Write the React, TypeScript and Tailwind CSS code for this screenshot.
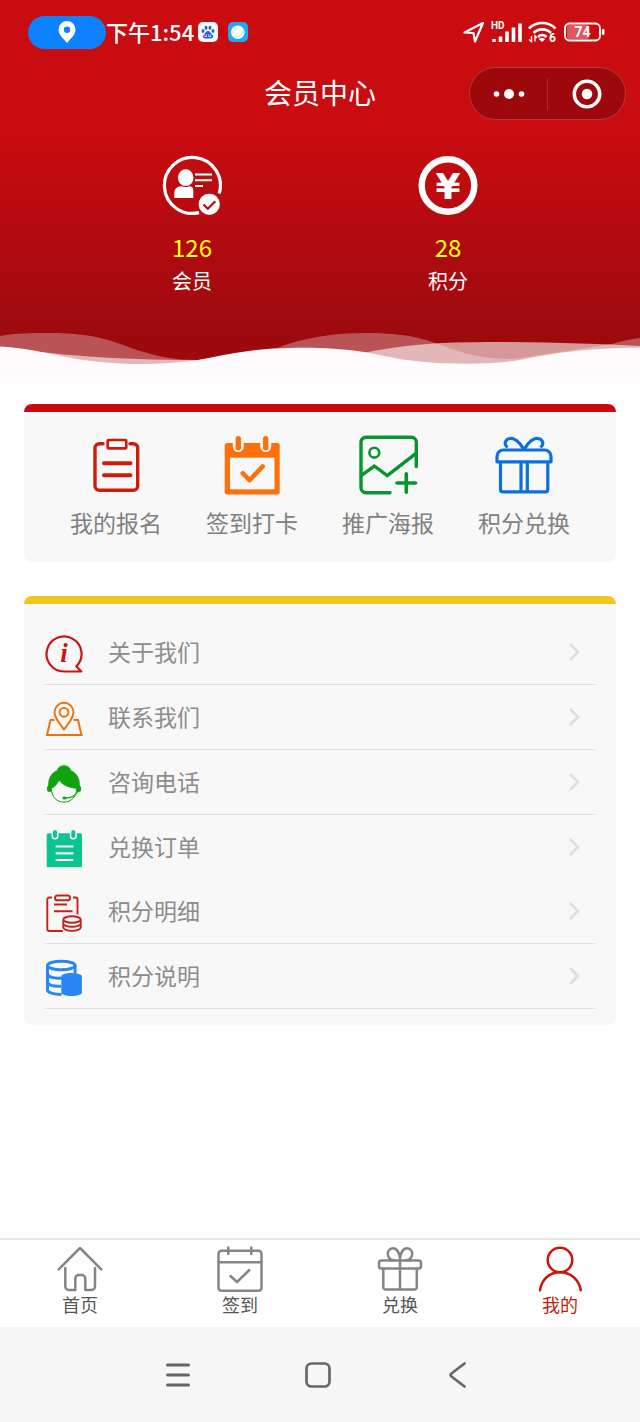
import type { ReactNode } from 'react';

const stats = [
  { name: '会员', value: 126, icon: <MemberIcon /> },
  { name: '积分', value: 28, icon: <PointsIcon /> },
];

const shortcuts = [
  { name: '我的报名', icon: <ClipboardIcon /> },
  { name: '签到打卡', icon: <CheckInIcon /> },
  { name: '推广海报', icon: <PosterIcon /> },
  { name: '积分兑换', icon: <GiftIcon /> },
];

const menu = [
  { name: '关于我们', icon: <AboutIcon />, divider: true },
  { name: '联系我们', icon: <ContactIcon />, divider: true },
  { name: '咨询电话', icon: <ServiceIcon />, divider: true },
  { name: '兑换订单', icon: <OrderIcon />, divider: false },
  { name: '积分明细', icon: <DetailIcon />, divider: true },
  { name: '积分说明', icon: <RulesIcon />, divider: true },
];

const tabs = [
  { name: '首页', icon: <HomeTabIcon />, active: false },
  { name: '签到', icon: <CalendarTabIcon />, active: false },
  { name: '兑换', icon: <GiftTabIcon />, active: false },
  { name: '我的', icon: <UserTabIcon />, active: true },
];

/* ---------- header icons ---------- */

function MemberIcon() {
  return (
    <svg className="size-[60px]" viewBox="0 0 60 60" fill="none" stroke="#fff">
      <path d="M57.2 38.5A28 28 0 1 0 37 57.6" strokeWidth="3.2" />
      <ellipse cx="23.7" cy="22.7" rx="7.8" ry="8.4" fill="#fff" stroke="none" />
      <path d="M12.3 43V38.5c0-4.5 2.5-7 7-7.200l4.400 1 4.400-1c2 .2 3.200 1.600 3.200 4.200V43z" fill="#fff" stroke="none" />
      <path d="M33 19.5h17M33 25.3h17M33 31h8" strokeWidth="2" />
      <circle cx="47.3" cy="49.3" r="10.6" fill="#fff" stroke="none" />
      <path d="M41.5 49.5l4.3 4.2 7.5-7.4" stroke="#b50c10" strokeWidth="2.2" />
    </svg>
  );
}

function PointsIcon() {
  return (
    <svg className="size-[60px]" viewBox="0 0 60 60">
      <circle cx="30" cy="30.5" r="26.3" fill="none" stroke="#fff" strokeWidth="6.4" />
      <text x="30" y="44" textAnchor="middle" fontSize="36" fontWeight="700" fill="#fff" fontFamily="DejaVu Sans, sans-serif">
        ¥
      </text>
    </svg>
  );
}

/* ---------- shortcut icons ---------- */

function ClipboardIcon() {
  return (
    <svg className="size-[60px]" viewBox="0 0 60 60" fill="none" stroke="#cf1a0c" strokeWidth="3.4" strokeLinecap="round">
      <path d="M17 8.7h-3.5a4.5 4.5 0 0 0-4.5 4.5v37.6a4.5 4.5 0 0 0 4.5 4.5h33.7a4.5 4.5 0 0 0 4.5-4.5V13.2a4.5 4.5 0 0 0-4.5-4.5H44" />
      <rect x="21.7" y="5" width="18.6" height="8.4" rx="1" strokeWidth="2.6" />
      <path d="M18 28.3h26.5M18 40.3h26.5" strokeWidth="4" />
    </svg>
  );
}

function CheckInIcon() {
  return (
    <svg className="size-[60px]" viewBox="0 0 60 60" fill="none" strokeLinecap="round" strokeLinejoin="round">
      <rect x="2.7" y="8" width="55" height="51.5" rx="2.5" fill="#ff6f0a" />
      <rect x="8" y="22.7" width="44.5" height="31.6" fill="#f8f8f8" />
      <path d="M16.3 4v7.5M43.7 4v7.5" stroke="#f8f8f8" strokeWidth="11" />
      <path d="M16.3 3.7v9M43.7 3.7v9" stroke="#ff6f0a" strokeWidth="5.4" />
      <path d="M20.7 38.3l6.9 6.9 13-13.7" stroke="#ff6f0a" strokeWidth="4.6" />
    </svg>
  );
}

function PosterIcon() {
  return (
    <svg className="size-[60px]" viewBox="0 0 60 60" fill="none" stroke="#08942e" strokeWidth="3.4" strokeLinecap="round">
      <path d="M32 57.7H8a5 5 0 0 1-5-5V7.3a5 5 0 0 1 5-5h45.3a5 5 0 0 1 5 5V31.5" />
      <circle cx="16.3" cy="17.7" r="4.9" strokeWidth="2.6" />
      <path d="M3.5 40.3L16.3 31l13 9.5L58 18.3" />
      <path d="M48.3 38.7v18.6M39 48h18.6" strokeWidth="3.6" />
    </svg>
  );
}

function GiftIcon() {
  return (
    <svg className="size-[60px]" viewBox="0 0 60 60" fill="none" stroke="#0b6fdc" strokeWidth="3.2" strokeLinejoin="round">
      <path d="M3 26.8V21.5a6.5 6.5 0 0 1 6.500-6.500h41a6.500 6.500 0 0 1 6.500 6.500v5.300z" />
      <path d="M6.500 28v26.500a2.300 2.300 0 0 0 2.300 2.300h42.700a2.300 2.300 0 0 0 2.300-2.300V28M27 28v28M33.300 28v28" />
      <path d="M29.500 14C26 7 20.500 3 16 3.500c-5 .6-6.500 6-2.500 9M30.500 14C34 7 39.500 3 44 3.500c5 .6 6.500 6 2.500 9" />
    </svg>
  );
}

/* ---------- menu icons ---------- */

function AboutIcon() {
  return (
    <svg className="size-[38px]" viewBox="0 0 38 38">
      <path d="M31.4 31.4A17.5 17.5 0 1 0 19 36.5h17.3z" fill="none" stroke="#cb1410" strokeWidth="2.2" strokeLinejoin="round" />
      <text x="19" y="27" textAnchor="middle" fontSize="27" fontWeight="700" fontStyle="italic" fill="#cb1410" fontFamily="Liberation Serif, serif">
        i
      </text>
    </svg>
  );
}

function ContactIcon() {
  return (
    <svg className="size-[38px]" viewBox="0 0 38 38" fill="none" stroke="#f0720f" strokeWidth="2">
      <path d="M19 29.5C15 24 9.500 18.500 9.500 12.300a9.500 9.500 0 0 1 19 0C28.500 18.500 23 24 19 29.500z" />
      <circle cx="19" cy="12.3" r="4.4" />
      <path d="M9.5 20H5.5L2 35h34.5L33 20h-4.5" />
    </svg>
  );
}

function ServiceIcon() {
  return (
    <svg className="size-[38px]" viewBox="0 0 38 38" fill="none">
      <ellipse cx="19" cy="6" rx="7" ry="5.8" fill="#0fa30f" />
      <path d="M3.5 24C1.500 11 9 4 19 4s17.500 7 15.500 20z" fill="#0fa30f" />
      <rect x="2" y="20.5" width="5" height="6.5" rx="2.500" fill="#0fa30f" />
      <rect x="31" y="20.5" width="5" height="6.5" rx="2.500" fill="#0fa30f" />
      <path d="M6.5 23.5C9.500 21.500 12.500 19 13.800 15c4 5 10 7.500 17.700 8.300.3 8-5.300 13.900-12.500 13.900S6.200 31.500 6.500 23.500z" fill="#f8f8f8" stroke="#0fa30f" strokeWidth="1" />
      <path d="M33 26c-2 4.500-7 7-13 7" stroke="#0fa30f" strokeWidth="1.2" />
      <ellipse cx="19.5" cy="33" rx="2.2" ry="1.5" fill="#0fa30f" />
    </svg>
  );
}

function OrderIcon() {
  return (
    <svg className="size-[38px]" viewBox="0 0 38 38" strokeLinecap="round">
      <rect x="1.7" y="3.3" width="35.3" height="34" rx="1.5" fill="#0bc58f" />
      <path d="M10 2.5v3.500M28.300 2.500v3.500" stroke="#f8f8f8" strokeWidth="7" />
      <path d="M10 2v4M28.300 2v4" stroke="#0bc58f" strokeWidth="4" />
      <path d="M11.500 16.500h16M11.500 23.300h16M11.500 30h16" stroke="#f8f8f8" strokeWidth="2.2" />
    </svg>
  );
}

function DetailIcon() {
  return (
    <svg className="size-[38px]" viewBox="0 0 38 38" fill="none" stroke="#c81f17" strokeWidth="1.9">
      <path d="M7 3.500H4.300a2 2 0 0 0-2 2v29.500a2 2 0 0 0 2 2h13.500M28 3.500h2.500a2 2 0 0 1 2 2v15" />
      <rect x="10" y="1.5" width="15" height="4.800" rx="2.400" />
      <path d="M9 10.500h13M9 17.300h18.500" />
      <ellipse cx="27" cy="25.5" rx="8.700" ry="3.200" />
      <path d="M18.300 25.500v8c0 1.800 4 3.300 8.700 3.300s8.700-1.500 8.700-3.300v-8M18.300 29.500c0 1.800 4 3.300 8.700 3.300s8.700-1.500 8.700-3.300" />
    </svg>
  );
}

function RulesIcon() {
  return (
    <svg className="size-[38px]" viewBox="0 0 38 38" fill="none" stroke="#2b86f5" strokeWidth="3">
      <ellipse cx="16.3" cy="6.5" rx="13.8" ry="4.300" />
      <path d="M2.500 6.500v24.500c0 2.500 6 4.500 14 4.500M30.100 6.500v8M2.500 15c1 3.200 7 4.500 14.500 4M2.500 23.300c1 3 7 4.300 13.500 4" />
      <path d="M16.300 17.500c0-2 4.500-3.500 10.300-3.500s10.300 1.500 10.300 3.500v16c0 2-4.500 3.500-10.300 3.500s-10.300-1.500-10.300-3.500z" fill="#2b86f5" stroke="none" />
    </svg>
  );
}

/* ---------- tab icons ---------- */

function TabIcon({ children }: { children: ReactNode }) {
  return (
    <svg className="size-12" viewBox="0 0 48 48" fill="none" stroke="currentColor" strokeWidth="2.5" strokeLinecap="round" strokeLinejoin="round">
      {children}
    </svg>
  );
}

function HomeTabIcon() {
  return (
    <TabIcon>
      <path d="M2.700 24.300L24 3l21.300 21.300" />
      <path d="M9.300 23v18.500a3.500 3.500 0 0 0 3.500 3.500h6.500V33.500a3.500 3.500 0 0 1 3.500-3.500h3a3.500 3.500 0 0 1 3.500 3.500V45h6.200a3.500 3.500 0 0 0 3.500-3.500V23" />
    </TabIcon>
  );
}

function CalendarTabIcon() {
  return (
    <TabIcon>
      <rect x="2.5" y="5.7" width="43" height="40" rx="3" />
      <path d="M3 17.300h42M12.300 2.500v6.500M35.300 2.500v6.500M14.500 31l6.500 6L33.300 25" />
    </TabIcon>
  );
}

function GiftTabIcon() {
  return (
    <TabIcon>
      <rect x="3" y="15.5" width="42" height="8" rx="2.5" />
      <path d="M7.300 24v18a2.500 2.500 0 0 0 2.500 2.500h28.500a2.500 2.500 0 0 0 2.500-2.500V24M24 15v29" />
      <path d="M24 15C24 8 21 3.300 17 3.300c-4 0-6 3.700-5 7 .8 2.800 3 4.700 6 5M24 15c0-7 3-11.700 7-11.700 4 0 6 3.700 5 7-.8 2.800-3 4.700-6 5" />
    </TabIcon>
  );
}

function UserTabIcon() {
  return (
    <TabIcon>
      <circle cx="24" cy="15" r="12.3" />
      <path d="M4 45.300C5.500 34.500 13.500 27.300 24 27.300S43 34.500 44.800 45.300" />
    </TabIcon>
  );
}

/* ---------- page parts ---------- */

function StatusBar() {
  return (
    <div className="flex h-16 items-center justify-between pr-[34px] pl-7">
      <div className="flex items-center">
        <span className="flex h-[33px] w-[78px] items-center justify-center rounded-full bg-[#0d82ff]">
          <svg className="h-[22px] w-[18px]" viewBox="0 0 18 22">
            <path d="M9 0a8.500 8.500 0 0 0-8.500 8.500C.5 14 5 17 9 22c4-5 8.500-8 8.500-13.500A8.500 8.500 0 0 0 9 0zm0 5.500a3.200 3.200 0 1 1 0 6.400 3.200 3.200 0 0 1 0-6.400z" fill="#fff" />
          </svg>
        </span>
        <span className="pb-0.5 text-[22px] leading-8 font-medium">下午1:54</span>
        <svg className="ml-1 size-5" viewBox="0 0 20 20">
          <rect width="20" height="20" rx="5" fill="#fff" />
          <g fill="#2f5fd0">
            <ellipse cx="5" cy="9" rx="1.5" ry="2" />
            <ellipse cx="8" cy="5.8" rx="1.5" ry="2.1" />
            <ellipse cx="12" cy="5.8" rx="1.5" ry="2.1" />
            <ellipse cx="15" cy="9" rx="1.5" ry="2" />
            <path d="M10 9c2 0 2.500 2 4 3.300 2 1.700 1.200 4.200-1 4.200H7c-2.200 0-3-2.500-1-4.200C7.500 11 8 9 10 9z" />
          </g>
          <path d="M8.500 12.500v2h-1.300a1 1 0 0 1 0-2M10.700 12.500v2h2v-2" fill="none" stroke="#fff" strokeWidth=".7" />
        </svg>
        <svg className="ml-2.5 size-5" viewBox="0 0 20 20">
          <rect width="20" height="20" rx="5" fill="#20a9f3" />
          <circle cx="9.8" cy="10.3" r="6.8" fill="#fff" />
          <path d="M15.500 7.500c0 4.500-3.500 7.500-8.500 8" fill="none" stroke="#bfe3fa" strokeWidth="1.2" />
        </svg>
      </div>

      <div className="flex items-center gap-1.5">
        <svg className="size-[22px]" viewBox="0 0 22 22" fill="none" stroke="#fff" strokeWidth="2.2" strokeLinejoin="round">
          <path d="M20 2L1.500 11.500l9 .5 1.500 8.500z" />
        </svg>
        <svg className="h-[22px] w-[31px]" viewBox="0 0 31 22">
          <text x="0" y="8" fontSize="10" fontWeight="700" fill="#fff" fontFamily="Roboto, sans-serif">
            HD
          </text>
          <path d="M3 21v-3M9.500 21v-5.500M16 21V10.500M22.500 21V6.500M29 21V2.500" stroke="#fff" strokeWidth="3.6" />
        </svg>
        <svg className="h-6 w-[30px]" viewBox="0 0 30 24" fill="none" stroke="#fff" strokeWidth="2.6">
          <path d="M1 8.500c7.500-7.300 19-7.300 26.500 0M5.500 13c5-4.800 12.500-4.800 17.500 0M10 17c2.500-2.500 6-2.500 8.500 0" />
          <path d="M10.500 19l3.700 3 3-3c-2-1.500-4.700-1.500-6.700 0z" fill="#fff" stroke="none" />
          <path d="M3.500 16v5.500L1 19.500M7 21.500v-5.500l2 2" strokeWidth="1.4" />
          <text x="21" y="21.5" fontSize="12" fontWeight="700" fill="#fff" stroke="none" fontFamily="Roboto, sans-serif">
            6
          </text>
        </svg>
        <svg className="h-5 w-[42px]" viewBox="0 0 42 20">
          <rect x="3" y="3" width="22" height="14" rx="2" fill="#e0565a" />
          <rect x="1" y="1.5" width="35" height="17" rx="4.5" fill="none" stroke="#fff" strokeWidth="1.9" />
          <rect x="38" y="7" width="2.5" height="6" rx="1" fill="#fff" />
          <text x="18.5" y="15" textAnchor="middle" fontSize="14" fontWeight="700" fill="#fff" fontFamily="Roboto, sans-serif">
            74
          </text>
        </svg>
      </div>
    </div>
  );
}

function TitleBar() {
  return (
    <div className="grid grid-cols-[1fr_auto_1fr] items-center pt-[3px] pr-3.5">
      <h1 className="col-start-2 pb-1 pl-3.5 text-[28px] leading-9">会员中心</h1>
      <div className="flex h-[53px] w-[157px] items-center justify-self-end rounded-full border border-[#b83a3c] bg-[#9c080c]">
        <button type="button" aria-label="更多" className="flex h-full flex-1 items-center justify-center">
          <svg className="h-3 w-8" viewBox="0 0 32 12" fill="#fff">
            <circle cx="3.5" cy="6" r="2.8" />
            <circle cx="16" cy="6" r="5" />
            <circle cx="28.5" cy="6" r="2.8" />
          </svg>
        </button>
        <span className="h-8 w-px bg-[#b02a2d]" />
        <button type="button" aria-label="关闭" className="flex h-full flex-1 items-center justify-center">
          <svg className="size-[30px]" viewBox="0 0 30 30">
            <circle cx="15" cy="15" r="12.7" fill="none" stroke="#fff" strokeWidth="3.6" />
            <circle cx="15" cy="15" r="5.3" fill="#fff" />
          </svg>
        </button>
      </div>
    </div>
  );
}

function Waves() {
  return (
    <svg className="mt-8 block h-10 w-full" viewBox="0 0 640 40" preserveAspectRatio="none">
      <path
        d="M0 5C16 2 32 2 49 2c51 0 66 10 91 18 20 6 35 9 58 9l79-12C305 6 335 2 367 2c51 0 66 10 91 18 20 6 35 8 56 8l98-15c10-3 18-5 28-6v33H0z"
        fill="#fff"
        fillOpacity=".3"
      />
      <path d="M0 16c60 8 110 13 198 13l165-7c37-8 77-11 127-11 60 0 110 2 150 4v25H0z" fill="#fff" fillOpacity=".58" />
      <path
        d="M0 15.500C40 18 65 28 100 31c30 3 65 3 98-2 37-7 57-12.300 104-12.300 48 0 68 5.300 93 10.300 35 7 85 7 119 3 36-7 66-13 126-13.300V40H0z"
        fill="#fffbfc"
      />
    </svg>
  );
}

function Header() {
  return (
    <header className="bg-linear-to-b from-[#c90c10] from-35% to-[#9d0a0e] to-90% text-white">
      <StatusBar />
      <TitleBar />
      <div className="grid grid-cols-2 px-16 pt-[35px]">
        {stats.map((item) => (
          <div key={item.name} className="flex flex-col items-center">
            {item.icon}
            <div className="mt-4 text-2xl text-[#ffff1e]">{item.value}</div>
            <div className="text-[20px] leading-9">{item.name}</div>
          </div>
        ))}
      </div>
      <Waves />
    </header>
  );
}

function Shortcuts() {
  return (
    <section className="overflow-hidden rounded-lg border-t-8 border-[#c8090e] bg-[#f8f8f8]">
      <div className="grid grid-cols-4 px-6 pt-[23px] pb-[22px]">
        {shortcuts.map((item) => (
          <button key={item.name} type="button" className="flex flex-col items-center gap-2.5 text-[23px] leading-[35px] text-[#808080]">
            {item.icon}
            {item.name}
          </button>
        ))}
      </div>
    </section>
  );
}

function Menu() {
  return (
    <section className="overflow-hidden rounded-lg border-t-8 border-[#f0c620] bg-[#f8f8f8] px-[21px] pt-4 pb-4">
      {menu.map((item) => (
        <a
          key={item.name}
          href="#"
          className={`box-content flex h-16 items-center pr-[15px] ${item.divider ? 'border-b border-[#e0e0e0]' : ''}`}
        >
          <span className="mt-1">{item.icon}</span>
          <span className="ml-[25px] flex-1 pb-0.5 text-[23px] leading-8 text-[#8c8c8c]">{item.name}</span>
          <svg className="h-5 w-3" viewBox="0 0 12 20" fill="none" stroke="#dedede" strokeWidth="2.5">
            <path d="M2 2l8 8-8 8" />
          </svg>
        </a>
      ))}
    </section>
  );
}

function TabBar() {
  return (
    <nav className="grid grid-cols-4 border-t-2 border-[#e6e6e6] bg-white pt-[5px] pb-3">
      {tabs.map((tab) => (
        <a key={tab.name} href="#" className="flex flex-col items-center">
          <span className={tab.active ? 'text-[#cc1408]' : 'text-[#858585]'}>{tab.icon}</span>
          <span className={`text-lg leading-[22px] ${tab.active ? 'text-[#c41a0c]' : 'text-[#555]'}`}>{tab.name}</span>
        </a>
      ))}
    </nav>
  );
}

function SystemNav() {
  return (
    <div className="flex h-[95px] items-center justify-center gap-28 bg-[#f6f6f6] pr-1">
      <button type="button" aria-label="最近任务">
        <svg className="size-7" viewBox="0 0 28 28" stroke="#666" strokeWidth="3" strokeLinecap="round">
          <path d="M3.500 4h21M3.500 14h21M3.500 24h21" />
        </svg>
      </button>
      <button type="button" aria-label="主屏幕">
        <svg className="size-7" viewBox="0 0 28 28" fill="none" stroke="#666" strokeWidth="2.7">
          <rect x="2.5" y="2.5" width="23" height="23" rx="5" />
        </svg>
      </button>
      <button type="button" aria-label="返回">
        <svg className="size-7" viewBox="0 0 28 28" fill="none" stroke="#666" strokeWidth="2.7" strokeLinecap="round" strokeLinejoin="round">
          <path d="M20.500 2.500L7.500 12.500q-2 1.500 0 3l13 10" />
        </svg>
      </button>
    </div>
  );
}

export default function App() {
  return (
    <div className="flex min-h-screen flex-col bg-white font-['Noto_Sans_CJK_SC','Noto_Sans',sans-serif]">
      <Header />
      <main className="flex flex-1 flex-col gap-[34px] bg-linear-to-b from-[#fffbfc] to-white to-3% px-6 pt-[33px] pb-8">
        <Shortcuts />
        <Menu />
      </main>
      <TabBar />
      <SystemNav />
    </div>
  );
}
